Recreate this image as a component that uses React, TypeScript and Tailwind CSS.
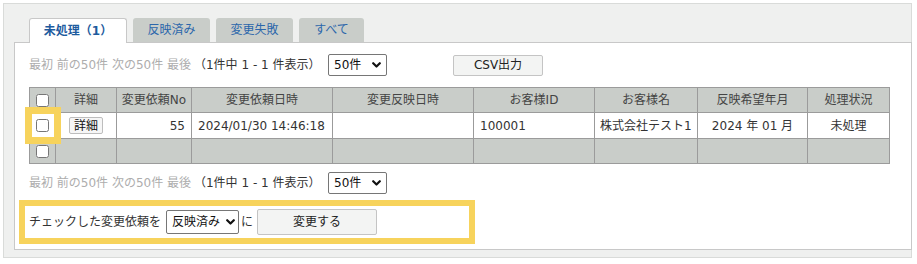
import React from "react";

function Chevron() {
  return (
    <svg width="9" height="6" viewBox="0 0 9 6" className="shrink-0">
      <path d="M1.2 1.2L4.5 4.5L7.8 1.2" fill="none" stroke="#111" strokeWidth="2.2" strokeLinecap="round" strokeLinejoin="round" />
    </svg>
  );
}

function PageRow() {
  return (
    <div className="flex items-center h-[22px]">
      <span className="w-[299px] shrink-0 whitespace-nowrap">
        <span className="text-[#adadad]">最初 前の50件 次の50件 最後</span>
        <span className="text-[#333] ml-[3px]">（1件中 1 - 1 件表示）</span>
      </span>
      <div className="flex items-center justify-between w-[59px] h-[22px] border border-[#767676] rounded-[2px] bg-white pl-[5px] pr-[5px] text-[#111]">
        <span>50件</span>
        <Chevron />
      </div>
    </div>
  );
}

const th = "border border-[#9b9b9b] bg-[#c9cdc9] h-[25px] text-center font-normal text-[#444] p-0";
const td = "border border-[#9b9b9b] bg-white h-[26px] p-0";
const te = "border border-[#9b9b9b] bg-[#c9cdc9] h-[25px] p-0";

export default function App() {
  return (
    <div className="p-[3px] text-[12px] leading-none text-[#333] font-['DejaVu_Sans','Noto_Sans_CJK_JP',sans-serif]">
      <div className="w-[909px] h-[255px] border border-[#d9dbd9] bg-[#eff0ef] pl-[10px] pt-[14px] pb-[7px] flex flex-col">
        {/* tabs */}
        <div className="flex items-start h-[24px] ml-[15px] gap-[6px]">
          <div className="relative z-10 w-[98px] h-[25px] bg-white border-x border-t border-[#c8c8c8] rounded-t-[3px] flex items-center justify-center font-bold text-[#1d5b9e]">
            未処理（1）
          </div>
          <div className="w-[77px] h-[24px] bg-[#c9cdc9] rounded-t-[3px] flex items-center justify-center text-[#2b66ab]">
            反映済み
          </div>
          <div className="w-[77px] h-[24px] bg-[#c9cdc9] rounded-t-[3px] flex items-center justify-center text-[#2b66ab]">
            変更失敗
          </div>
          <div className="w-[65px] h-[24px] bg-[#c9cdc9] rounded-t-[3px] flex items-center justify-center text-[#2b66ab]">
            すべて
          </div>
        </div>
        {/* panel */}
        <div className="flex-1 -mr-px border border-[#c8c8c8] bg-white pl-[14px] pt-[11px] pb-[4px] flex flex-col">
          <div className="flex items-center">
            <PageRow />
            <button className="ml-[66px] w-[90px] h-[21px] bg-[#f3f4f3] border border-[#c4c4c4] rounded-[2px] text-[#222] flex items-center justify-center">
              CSV出力
            </button>
          </div>

          <div className="relative mt-[11px] w-[860px]">
            <table className="table-fixed w-[860px] border-collapse">
              <colgroup>
                <col className="w-[26px]" />
                <col className="w-[61px]" />
                <col className="w-[75px]" />
                <col className="w-[141px]" />
                <col className="w-[141px]" />
                <col className="w-[121px]" />
                <col className="w-[103px]" />
                <col className="w-[110px]" />
                <col className="w-[82px]" />
              </colgroup>
              <thead>
                <tr>
                  <th className={th}>
                    <input type="checkbox" className="block mx-auto w-[13px] h-[13px]" />
                  </th>
                  <th className={th}>詳細</th>
                  <th className={th}>変更依頼No</th>
                  <th className={th}>変更依頼日時</th>
                  <th className={th}>変更反映日時</th>
                  <th className={th}>お客様ID</th>
                  <th className={th}>お客様名</th>
                  <th className={th}>反映希望年月</th>
                  <th className={th}>処理状況</th>
                </tr>
              </thead>
              <tbody>
                <tr>
                  <td className={td}>
                    <input type="checkbox" className="block mx-auto w-[13px] h-[13px]" />
                  </td>
                  <td className={td}>
                    <div className="flex justify-center">
                      <button className="w-[34px] h-[17px] bg-[#f6f6f6] border border-[#bdbdbd] rounded-[2px] text-[#111] flex items-center justify-center">
                        詳細
                      </button>
                    </div>
                  </td>
                  <td className={td + " text-right pr-[6px]"}>55</td>
                  <td className={td + " pl-[6px] whitespace-nowrap"}>2024/01/30 14:46:18</td>
                  <td className={td}></td>
                  <td className={td + " pl-[6px]"}>100001</td>
                  <td className={td + " pl-[5px] whitespace-nowrap"}>株式会社テスト1</td>
                  <td className={td + " text-center whitespace-nowrap"}>2024 年 01 月</td>
                  <td className={td + " text-center"}>未処理</td>
                </tr>
                <tr>
                  <td className={te}>
                    <input type="checkbox" className="block mx-auto w-[13px] h-[13px]" />
                  </td>
                  <td className={te}></td>
                  <td className={te}></td>
                  <td className={te}></td>
                  <td className={te}></td>
                  <td className={te}></td>
                  <td className={te}></td>
                  <td className={te}></td>
                  <td className={te}></td>
                </tr>
              </tbody>
            </table>
            <div className="pointer-events-none absolute left-[-4px] top-[20px] w-[36px] h-[37px] border-[7px] border-[#f7d35c]"></div>
          </div>

          <div className="mt-[8px]">
            <PageRow />
          </div>

          <div className="mt-[6px] -ml-[10px] w-[456px] h-[44px] border-[6px] border-[#f7d35c] bg-white pl-[4px] flex items-center">
            <span className="whitespace-nowrap">チェックした変更依頼を</span>
            <div className="ml-[5px] flex items-center justify-between w-[73px] h-[24px] border border-[#767676] rounded-[2px] bg-white pl-[5px] pr-[3px] text-[#111]">
              <span className="whitespace-nowrap">反映済み</span>
              <Chevron />
            </div>
            <span className="ml-[2px]">に</span>
            <button className="ml-[4px] w-[120px] h-[26px] bg-[#f3f4f3] border border-[#c4c4c4] rounded-[2px] text-[#222] flex items-center justify-center">
              変更する
            </button>
          </div>
        </div>
      </div>
    </div>
  );
}
